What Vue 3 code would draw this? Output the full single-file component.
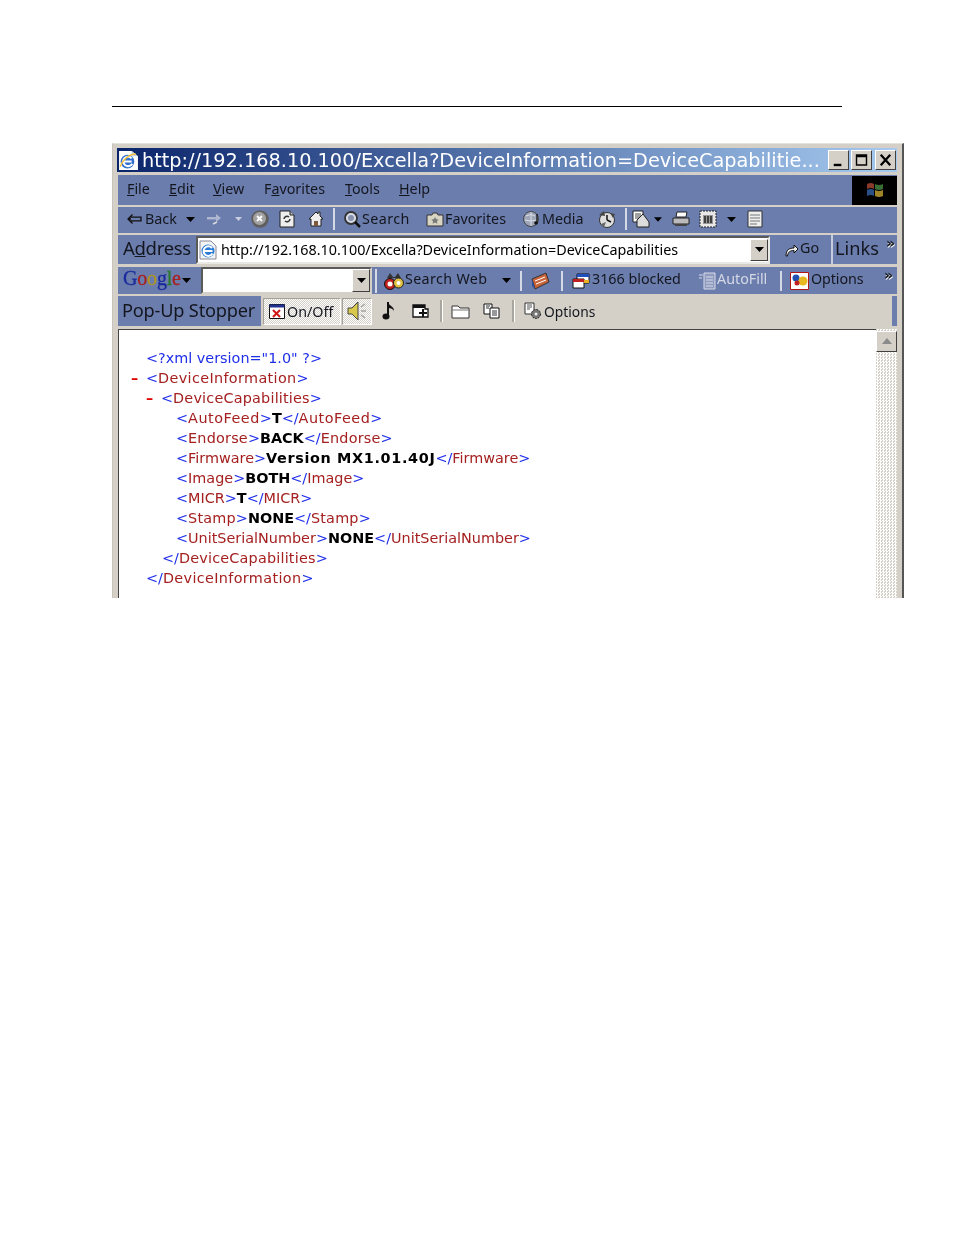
<script setup>
const caret = 'M0 0h9L4.5 5z'
</script>

<template>
  <div class="page">
    <div class="rule"></div>
    <div class="window">
      <div class="titlebar">
        <svg class="ico-title" viewBox="0 0 20 20">
          <path d="M1 1h12l6 5v13H1z" fill="#fff"/>
          <path d="M13 1v5h6" fill="#c8d4e8"/>
          <circle cx="9" cy="11" r="6.500" fill="#2f6fd0"/>
          <path d="M5 11h8M13 8a4.500 4.500 0 1 0 .5 5" stroke="#fff" stroke-width="2" fill="none"/>
          <path d="M2 16C5 8 13 3 17 4" stroke="#f0c040" stroke-width="1.400" fill="none"/>
        </svg>
        <span class="title-text">http://192.168.10.100/Excella?DeviceInformation=DeviceCapabilitie...</span>
        <div class="caption-btn btn-min"><svg viewBox="0 0 20 18"><path d="M5 13h8v2.500H5z" fill="#000"/></svg></div>
        <div class="caption-btn btn-max"><svg viewBox="0 0 20 18"><path d="M4 3h12v12H4zM5.500 6v7.500h9V6z" fill="#000" fill-rule="evenodd"/></svg></div>
        <div class="caption-btn btn-close"><svg viewBox="0 0 20 18"><path d="M5 3.500l10 11M15 3.500l-10 11" stroke="#000" stroke-width="2.400"/></svg></div>
      </div>

      <div class="row menu">
        <span class="m-file"><u>F</u>ile</span>
        <span class="m-edit"><u>E</u>dit</span>
        <span class="m-view"><u>V</u>iew</span>
        <span class="m-fav">F<u>a</u>vorites</span>
        <span class="m-tools"><u>T</u>ools</span>
        <span class="m-help"><u>H</u>elp</span>
        <div class="flag">
          <svg viewBox="0 0 20 18">
            <path d="M2 3q4-2 7 0v5q-3-2-7 0z" fill="#8a3a2a"/>
            <path d="M10 3q4 2 8 0v5q-4 2-8 0z" fill="#386e34"/>
            <path d="M2 9q4-2 7 0v6q-3-2-7 0z" fill="#2a4f86"/>
            <path d="M10 9q4 2 8 0v6q-4 2-8 0z" fill="#a08428"/>
          </svg>
        </div>
      </div>

      <div class="row nav">
        <svg class="n-back" viewBox="0 0 15 12"><path d="M5.500 1.500L1 6l4.500 4.500M1 6h3M3 4.200h11v3.600H3" fill="none" stroke="#111" stroke-width="1.300"/></svg>
        <span class="n-back-t">Back</span>
        <svg class="n-caret1" viewBox="0 0 9 5"><path :d="caret" fill="#000"/></svg>
        <svg class="n-fwd" viewBox="0 0 15 12"><path d="M0 4h9V1l5 4-5 4V6.500H0z" fill="#aeb6d0"/><path d="M6 11l4-2" stroke="#ddd" stroke-width="1.500"/></svg>
        <svg class="n-caret2" viewBox="0 0 9 5"><path :d="caret" fill="#c9cede"/></svg>
        <svg class="n-stop" viewBox="0 0 18 18"><circle cx="9" cy="9" r="8.800" fill="#5f5f5f"/><circle cx="8.500" cy="8.500" r="6.500" fill="#a2a2a2"/><path d="M6 6l5 5M11 6l-5 5" stroke="#fff" stroke-width="1.800"/></svg>
        <svg class="n-refresh" viewBox="0 0 16 18"><path d="M1 1h10l4 4v12H1z" fill="#eee" stroke="#222"/><path d="M11 1v4h4" fill="#bbb" stroke="#222"/><path d="M5 9a3 3 0 0 1 5-2M11 9a3 3 0 0 1-5 2" stroke="#333" stroke-width="1.500" fill="none"/></svg>
        <svg class="n-home" viewBox="0 0 16 18"><path d="M8 2L1 9h2v7h10V9h2L12 6V2h-2v2z" fill="#eee" stroke="#222"/><path d="M6 16v-5h4v5" fill="#7a5a3a"/></svg>
        <i class="sep n-sep1"></i>
        <svg class="n-search" viewBox="0 0 18 18"><circle cx="8" cy="8" r="6" fill="#d9dde8" stroke="#333" stroke-width="1.800"/><circle cx="8" cy="8" r="3" fill="#8a93ad"/><path d="M12 12l5 5" stroke="#111" stroke-width="2.500"/></svg>
        <span class="n-search-t">Search</span>
        <svg class="n-favi" viewBox="0 0 18 16"><path d="M1 4h5l1-2h4l1 2h5v11H1z" fill="#d8d4c4" stroke="#333"/><path d="M9 6l1.200 2.300 2.500.3-1.800 1.700.5 2.500L9 11.600l-2.400 1.200.5-2.500-1.800-1.700 2.500-.3z" fill="#777"/></svg>
        <span class="n-fav-t">Favorites</span>
        <svg class="n-media" viewBox="0 0 18 18"><circle cx="8" cy="9" r="7.500" fill="#9ea6b8" stroke="#444"/><path d="M3 6q5-3 9 0M2 10q6 2 11 0M8 2v14" stroke="#d9dde6" fill="none"/><path d="M14 4v9" stroke="#111" stroke-width="1.300"/><circle cx="13" cy="13" r="1.800" fill="#111"/></svg>
        <span class="n-media-t">Media</span>
        <svg class="n-hist" viewBox="0 0 18 18"><circle cx="9" cy="10" r="7.500" fill="#ddd" stroke="#333"/><path d="M9 10V5M9 10l4 2" stroke="#111" stroke-width="1.500"/><path d="M1 5l5-4 1 5zM12 3l5 1-2 4z" fill="#444"/><path d="M3 14l5-2-2 5z" fill="#666"/></svg>
        <i class="sep n-sep2"></i>
        <svg class="n-mail" viewBox="0 0 18 18"><path d="M1 1h10v11H1z" fill="#fff" stroke="#222"/><path d="M3 4h6M3 6h6M3 8h4" stroke="#444"/><path d="M5 10l6-6 6 8v5H5z" fill="#ddd" stroke="#222"/></svg>
        <svg class="n-caret3" viewBox="0 0 9 5"><path :d="caret" fill="#000"/></svg>
        <svg class="n-print" viewBox="0 0 18 16"><path d="M5 1h10l-1 5H4z" fill="#fff" stroke="#222"/><path d="M1 7h16v6H1z" fill="#bbb" stroke="#222"/><path d="M3 13h12v2H3z" fill="#444"/></svg>
        <svg class="n-edit" viewBox="0 0 18 18"><path d="M1 1h16v16H1z" fill="#e8e8e8" stroke="#222" stroke-dasharray="2 1"/><path d="M4 5h10v9H4z" fill="#999"/><path d="M6 6v7M9 6v7M12 6v7" stroke="#111" stroke-width="1.300"/></svg>
        <svg class="n-caret4" viewBox="0 0 9 5"><path :d="caret" fill="#000"/></svg>
        <svg class="n-disc" viewBox="0 0 16 18"><path d="M1 1h14v16H1z" fill="#eee" stroke="#333"/><path d="M3 5h10M3 8h10M3 11h10M3 14h7" stroke="#777"/></svg>
      </div>

      <div class="row addr">
        <span class="a-label">A<u>d</u>dress</span>
        <div class="a-input">
          <svg class="a-ie" viewBox="0 0 20 20">
            <path d="M2 1h11l5 5v13H2z" fill="#f4f4f4" stroke="#889"/>
            <circle cx="10" cy="11" r="6.500" fill="#2a7bd6"/>
            <path d="M5.500 11h9M14 8a4.800 4.800 0 1 0 .5 5.500" stroke="#fff" stroke-width="2" fill="none"/>
          </svg>
          <span class="a-url">http://192.168.10.100/Excella?DeviceInformation=DeviceCapabilities</span>
          <div class="drop a-drop"><svg viewBox="0 0 9 5"><path :d="caret" fill="#000"/></svg></div>
        </div>
        <svg class="a-go" viewBox="0 0 15 15"><path d="M2 14c0-6 3-8 8-8V3l4 4-4 4V8.500C6 8.500 4 10 3.500 14z" fill="#eee" stroke="#111"/></svg>
        <span class="a-go-t">Go</span>
        <i class="a-sep"></i>
        <span class="a-links">Links</span>
        <span class="chev a-chev">»</span>
      </div>

      <div class="row goog">
        <span class="g-logo"><b class="c-b">G</b><b class="c-r">o</b><b class="c-y">o</b><b class="c-b">g</b><b class="c-g">l</b><b class="c-r">e</b></span>
        <svg class="g-caret" viewBox="0 0 9 5"><path :d="caret" fill="#000"/></svg>
        <div class="g-input">
          <div class="drop g-drop"><svg viewBox="0 0 9 5"><path :d="caret" fill="#000"/></svg></div>
        </div>
        <i class="sep g-sep1"></i>
        <svg class="g-bino" viewBox="0 0 20 20"><path d="M3 7l3-5 3 4h2l3-4 3 5z" fill="#333"/><circle cx="6" cy="13" r="5.500" fill="#c02020" stroke="#111"/><circle cx="6" cy="13" r="2.500" fill="#fff"/><circle cx="14.500" cy="12" r="5" fill="#e0c040" stroke="#222"/><circle cx="14.500" cy="12" r="2" fill="#fff"/></svg>
        <span class="g-search-t">Search Web</span>
        <svg class="g-caret2" viewBox="0 0 9 5"><path :d="caret" fill="#000"/></svg>
        <i class="sep g-sep2"></i>
        <svg class="g-news" viewBox="0 0 20 18"><path d="M2 7l14-6 3 9-14 7z" fill="#c8643c" stroke="#333"/><path d="M5 9l10-4M6 12l10-4" stroke="#fff"/><path d="M2 7l3 10-3-3z" fill="#3050a0"/></svg>
        <i class="sep g-sep3"></i>
        <svg class="g-block" viewBox="0 0 18 16"><path d="M5 1h12v9H5z" fill="#fff" stroke="#111"/><path d="M5 1h12v3H5z" fill="#2050c0"/><path d="M1 6h11v9H1z" fill="#fff" stroke="#111"/><path d="M1 6h11v3H1z" fill="#c02020"/><path d="M12 7h5v3h-5z" fill="#e8b020"/></svg>
        <span class="g-block-t">3166 blocked</span>
        <svg class="g-fill" viewBox="0 0 17 18"><path d="M5 1h11v16H5z" fill="#8f9cc0" stroke="#d8dcea"/><path d="M7 5h7M7 8h7M7 11h7M7 14h7" stroke="#d8dcea"/><path d="M0 3h4M0 6h3" stroke="#d8dcea"/></svg>
        <span class="g-fill-t">AutoFill</span>
        <i class="sep g-sep4"></i>
        <svg class="g-opt" viewBox="0 0 19 18"><path d="M.5.5h18v17H.5z" fill="#fff" stroke="#b01818"/><circle cx="6" cy="6" r="3.500" fill="#2050b0"/><circle cx="13" cy="9" r="4.500" fill="#e8b820"/><circle cx="7" cy="11" r="2.500" fill="#c02020"/></svg>
        <span class="g-opt-t">Options</span>
        <span class="chev g-chev">»</span>
      </div>

      <div class="row pop">
        <div class="p-label">Pop-Up Stopper</div>
        <div class="p-btn p-onoff">
          <svg class="p-x" viewBox="0 0 16 15"><path d="M.5.5h15v14H.5z" fill="#fff" stroke="#111"/><path d="M.5.500h15v3H.5z" fill="#20308c"/><path d="M4 6l7 7M11 6l-7 7" stroke="#d01818" stroke-width="2"/></svg>
          <span>On/Off</span>
        </div>
        <div class="p-btn p-sound">
          <svg viewBox="0 0 20 20"><path d="M1 7h4l6-6v18l-6-6H1z" fill="#d8c84c" stroke="#444"/><path d="M14 6l4-3M14 10h5M14 14l4 3" stroke="#a5a59c" stroke-width="1.500"/></svg>
        </div>
        <svg class="p-note" viewBox="0 0 14 20"><path d="M6 1v14" stroke="#111" stroke-width="2"/><ellipse cx="4" cy="15.500" rx="3.500" ry="3" fill="#111"/><path d="M6 1c1 4 6 4 6 9-1-2-3-3-6-3z" fill="#111"/></svg>
        <svg class="p-plus" viewBox="0 0 18 16"><path d="M1 2h12v4h3v8H1z" fill="#fff" stroke="#111" stroke-width="1.300"/><path d="M1 2h12v3H1z" fill="#111"/><path d="M11 6v8M7 10h8" stroke="#111" stroke-width="2"/></svg>
        <i class="sep-grey p-sep1"></i>
        <svg class="p-folder" viewBox="0 0 19 15"><path d="M1 4V2h6l2 2h9v10H1z" fill="#fff" stroke="#333"/><path d="M1 6h17" stroke="#777"/></svg>
        <svg class="p-copy" viewBox="0 0 17 16"><path d="M1 1h8v10H1z" fill="#fff" stroke="#111"/><path d="M7 5h9v10H7z" fill="#fff" stroke="#111"/><path d="M3 3h4M3 5h3M9 8h5M9 10h5M9 12h5" stroke="#333"/></svg>
        <i class="sep-grey p-sep2"></i>
        <svg class="p-gear" viewBox="0 0 18 18"><path d="M1 1h9v11H1z" fill="#fff" stroke="#333"/><path d="M3 3h5M3 5h5M3 7h3" stroke="#555"/><circle cx="12" cy="12" r="4.500" fill="#777" stroke="#222" stroke-dasharray="2 1"/><circle cx="12" cy="12" r="1.500" fill="#eee"/></svg>
        <span class="p-opt-t">Options</span>
        <div class="p-end"></div>
      </div>

      <div class="content">
        <div class="xml">
          <div class="line l0"><span class="b">&lt;?xml version="1.0" ?&gt;</span></div>
          <div class="line l0m"><span class="minus">–</span><span class="b">&lt;</span><span class="r w35">DeviceInformation</span><span class="b">&gt;</span></div>
          <div class="line l1m"><span class="minus">–</span><span class="b">&lt;</span><span class="r w20">DeviceCapabilities</span><span class="b">&gt;</span></div>
          <div class="line l2"><span class="b">&lt;</span><span class="r w50">AutoFeed</span><span class="b">&gt;</span><b>T</b><span class="b">&lt;/</span><span class="r w50">AutoFeed</span><span class="b">&gt;</span></div>
          <div class="line l2"><span class="b">&lt;</span><span class="r w20">Endorse</span><span class="b">&gt;</span><b>BACK</b><span class="b">&lt;/</span><span class="r w20">Endorse</span><span class="b">&gt;</span></div>
          <div class="line l2"><span class="b">&lt;</span><span class="r">Firmware</span><span class="b">&gt;</span><b class="wb">Version MX1.01.40J</b><span class="b">&lt;/</span><span class="r">Firmware</span><span class="b">&gt;</span></div>
          <div class="line l2"><span class="b">&lt;</span><span class="r">Image</span><span class="b">&gt;</span><b>BOTH</b><span class="b">&lt;/</span><span class="r">Image</span><span class="b">&gt;</span></div>
          <div class="line l2"><span class="b">&lt;</span><span class="r">MICR</span><span class="b">&gt;</span><b>T</b><span class="b">&lt;/</span><span class="r">MICR</span><span class="b">&gt;</span></div>
          <div class="line l2"><span class="b">&lt;</span><span class="r w20">Stamp</span><span class="b">&gt;</span><b>NONE</b><span class="b">&lt;/</span><span class="r w20">Stamp</span><span class="b">&gt;</span></div>
          <div class="line l2"><span class="b">&lt;</span><span class="r">UnitSerialNumber</span><span class="b">&gt;</span><b>NONE</b><span class="b">&lt;/</span><span class="r">UnitSerialNumber</span><span class="b">&gt;</span></div>
          <div class="line l1c"><span class="b">&lt;/</span><span class="r w20">DeviceCapabilities</span><span class="b">&gt;</span></div>
          <div class="line l0"><span class="b">&lt;/</span><span class="r w35">DeviceInformation</span><span class="b">&gt;</span></div>
        </div>
        <div class="scroll">
          <div class="up"><svg viewBox="0 0 12 7"><path d="M6 0l5 6H1z" fill="#8a8a8a"/></svg></div>
        </div>
      </div>
    </div>
  </div>
</template>

<style>
html, body { margin: 0; background: #fff; }
</style>

<style scoped>
.page { width: 954px; height: 1235px; background: #fff; padding: 106px 0 0 112px; box-sizing: border-box; overflow: hidden; }
.rule { width: 730px; height: 1px; background: #000; }
.window { margin-top: 36px; width: 792px; height: 455px; box-sizing: border-box; background: #d4d0c8; padding: 4px 0 0 4px; border-right: 2px solid #555; border-left: 1px solid #c8c4bc; border-top: 1px solid #e4e2dc; display: flex; flex-direction: column; overflow: hidden; font-family: "Noto Sans", sans-serif; color: #14161f; filter: blur(.35px); }
.titlebar { width: 780px; height: 24px; flex: none; background: linear-gradient(90deg, #0a246a, #a6caf0); display: flex; align-items: center; }
.ico-title { width: 21px; height: 21px; flex: none; margin-left: 1px; }
.title-text { font-family: "DejaVu Sans", sans-serif; font-size: 19.300px; color: #fff; margin-left: 3px; width: 686px; white-space: nowrap; flex: none; }
.caption-btn { width: 21px; height: 20px; flex: none; background: #d4d0c8; border: 1px solid; border-color: #fff #404040 #404040 #fff; box-sizing: border-box; margin-left: 2px; }
.caption-btn svg { display: block; width: 100%; height: 100%; }
.btn-min { margin-left: 0; }
.btn-close { margin-left: 3px; }

.row { flex: none; width: 780px; margin-left: 1px; display: flex; align-items: center; background: #6b7dad; white-space: nowrap; font-size: 14.300px; box-sizing: border-box; }
.row svg { flex: none; }
.row > span { flex: none; padding-bottom: 4px; }
.menu { height: 30px; margin-top: 3px; padding-left: 9px; width: 779px; }
.m-file { width: 42px; } .m-edit { width: 44px; } .m-view { width: 51px; } .m-fav { width: 81px; } .m-tools { width: 54px; } .m-help { width: 453px; }
.flag { width: 45px; height: 29px; background: #000; display: flex; align-items: center; justify-content: center; flex: none; }
.flag svg { width: 20px; height: 18px; }

.nav { height: 26px; margin-top: 2px; width: 779px; padding-bottom: 2px; }
.nav > span { padding-bottom: 2px; }
.n-back { width: 15px; height: 12px; margin-left: 9px; }
.n-back-t { width: 30px; margin-left: 3px; }
.n-caret1 { width: 9px; height: 5px; margin-left: 11px; }
.n-fwd { width: 15px; height: 12px; margin-left: 12px; }
.n-caret2 { width: 7px; height: 4px; margin-left: 13px; }
.n-stop { width: 18px; height: 18px; margin-left: 9px; }
.n-refresh { width: 16px; height: 18px; margin-left: 10px; }
.n-home { width: 16px; height: 18px; margin-left: 13px; }
.sep { width: 2px; height: 22px; flex: none; background: #d5d9e4; }
.n-sep1 { margin-left: 9px; }
.n-search { width: 18px; height: 18px; margin-left: 8px; }
.n-search-t { width: 48px; margin-left: 1px; letter-spacing: .4px; }
.n-favi { width: 18px; height: 16px; margin-left: 16px; }
.n-fav-t { width: 62px; margin-left: 1px; }
.n-media { width: 18px; height: 18px; margin-left: 16px; }
.n-media-t { width: 41px; margin-left: 1px; }
.n-hist { width: 18px; height: 18px; margin-left: 15px; }
.n-sep2 { margin-left: 9px; }
.n-mail { width: 18px; height: 18px; margin-left: 5px; }
.n-caret3 { width: 8px; height: 5px; margin-left: 4px; }
.n-print { width: 18px; height: 16px; margin-left: 10px; }
.n-edit { width: 18px; height: 18px; margin-left: 9px; }
.n-caret4 { width: 9px; height: 5px; margin-left: 10px; }
.n-disc { width: 16px; height: 18px; margin-left: 11px; }

.addr { height: 29px; margin-top: 2px; width: 779px; padding-left: 5px; }
.a-label { font-size: 18.500px; letter-spacing: -.3px; width: 73px; }
.a-input { width: 574px; height: 28px; flex: none; box-sizing: border-box; background: #fff; border: 2px solid; border-color: #5a5a5a #e8e8e4 #e8e8e4 #5a5a5a; display: flex; align-items: center; color: #000; }
.a-ie { width: 20px; height: 20px; margin-left: 0; }
.a-url { font-size: 14.350px; margin-left: 3px; width: 529px; }
.drop { width: 18px; height: 22px; flex: none; box-sizing: border-box; background: #d4d0c8; border: 1px solid; border-color: #fff #404040 #404040 #fff; display: flex; align-items: center; justify-content: center; }
.drop svg { width: 9px; height: 5px; }
.a-go { width: 15px; height: 15px; margin-left: 14px; }
.a-go-t { width: 20px; margin-left: 1px; }
.a-sep { width: 2px; height: 29px; flex: none; background: #c7ccdc; margin-left: 11px; }
.a-links { font-size: 18.200px; width: 45px; margin-left: 2px; }
.chev { font-family: "DejaVu Sans", sans-serif; font-weight: 700; font-size: 14px; line-height: 14px; align-self: flex-start; color: #111; text-shadow: .6px .6px #fff; margin-top: 1px; }
.a-chev { margin-left: 6px; }

.goog { height: 27px; margin-top: 3px; width: 779px; padding-left: 5px; }
.g-logo { font-family: "Liberation Serif", serif; font-size: 20px; width: 58px; letter-spacing: -.2px; -webkit-text-stroke: .3px currentColor; }
.g-logo b { font-weight: 400; }
.c-b { color: #1b2a9c; } .c-r { color: #a82020; } .c-y { color: #b09420; } .c-g { color: #2a7a2a; }
.g-caret { width: 9px; height: 5px; margin-left: 1px; }
.g-input { width: 171px; height: 27px; flex: none; margin-left: 10px; box-sizing: border-box; background: #fff; border: 2px solid; border-color: #5a5a5a #d4d0c8 #d4d0c8 #5a5a5a; display: flex; justify-content: flex-end; align-items: center; }
.g-drop { height: 23px; }
.g-sep1 { margin-left: 3px; height: 24px; }
.g-bino { width: 20px; height: 20px; margin-left: 7px; }
.g-search-t { width: 84px; margin-left: 1px; letter-spacing: .35px; }
.g-caret2 { width: 9px; height: 5px; margin-left: 13px; }
.g-sep2 { margin-left: 9px; height: 20px; }
.g-news { width: 20px; height: 18px; margin-left: 8px; }
.g-sep3 { margin-left: 11px; height: 20px; }
.g-block { width: 18px; height: 16px; margin-left: 9px; }
.g-block-t { width: 88px; margin-left: 2px; }
.g-fill { width: 17px; height: 18px; margin-left: 19px; }
.g-fill-t { width: 50px; margin-left: 1px; color: #d5d9e6; }
.g-sep4 { margin-left: 13px; height: 20px; }
.g-opt { width: 19px; height: 18px; margin-left: 8px; }
.g-opt-t { width: 51px; margin-left: 2px; letter-spacing: -.1px; }
.g-chev { margin-left: 22px; }

.pop { height: 30px; margin-top: 2px; width: 779px; background: #d4d0c8; }
.pop > span { padding-bottom: 0; }
.p-label { width: 143px; height: 30px; flex: none; line-height: 28px; background: #6b7dad; font-size: 18.200px; padding-left: 4px; box-sizing: border-box; letter-spacing: -.2px; }
.p-btn { height: 27px; flex: none; box-sizing: border-box; display: flex; align-items: center; border: 1px solid; border-color: #a5a29a #fff #fff #a5a29a; background: repeating-conic-gradient(#fff 0 25%, #d4d0c8 0 50%) 0 0 / 2px 2px; }
.p-onoff { width: 78px; margin-left: 2px; padding-left: 5px; }
.p-x { width: 16px; height: 15px; margin-right: 2px; }
.p-sound { width: 30px; justify-content: center; margin-left: 1px; }
.p-sound svg { width: 20px; height: 20px; }
.p-note { width: 14px; height: 20px; margin-left: 10px; }
.p-plus { width: 18px; height: 16px; margin-left: 16px; }
.sep-grey { width: 2px; height: 22px; flex: none; background: #a9a69e; box-shadow: 1px 0 #fff; }
.p-sep1 { margin-left: 10px; }
.p-folder { width: 19px; height: 15px; margin-left: 9px; }
.p-copy { width: 17px; height: 16px; margin-left: 13px; }
.p-sep2 { margin-left: 12px; }
.p-gear { width: 18px; height: 18px; margin-left: 10px; }
.p-opt-t { width: 50px; margin-left: 2px; font-size: 13.800px; }
.p-end { width: 5px; height: 30px; flex: none; margin-left: auto; background: #6b7dad; }

.content { flex: 1; min-height: 0; width: 779px; margin-left: 1px; margin-top: 3px; background: #fff; display: flex; box-shadow: inset 1px 1px #444; }
.xml { width: 758px; flex: none; padding-top: 19px; box-sizing: border-box; font-family: "DejaVu Sans", sans-serif; font-size: 14.400px; line-height: 20px; white-space: nowrap; }
.line { height: 20px; }
.l0 { padding-left: 28px; }
.l0m { padding-left: 13px; }
.l1m { padding-left: 28px; }
.l2 { padding-left: 58px; }
.l1c { padding-left: 44px; }
.minus { color: #e00000; font-weight: 700; display: inline-block; width: 15px; }
.b { color: #1f2fe8; }
.r { color: #a52020; }
.w20 { letter-spacing: .2px; }
.w35 { letter-spacing: .35px; }
.w50 { letter-spacing: .5px; }
.line b { color: #000; font-weight: 700; }
.line .wb { letter-spacing: .65px; }
.scroll { width: 21px; flex: none; background: repeating-conic-gradient(#fff 0 25%, #d4d0c8 0 50%) 0 0 / 3px 3px; }
.up { height: 21px; margin-top: 2px; box-sizing: border-box; background: #d4d0c8; border: 1px solid; border-color: #fff #404040 #404040 #fff; display: flex; align-items: center; justify-content: center; }
.up svg { width: 12px; height: 7px; }
</style>
